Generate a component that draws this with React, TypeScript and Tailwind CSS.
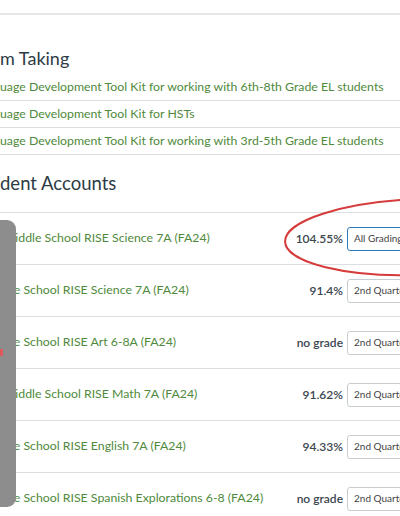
import React from 'react';

const links = [
  'uage Development Tool Kit for working with 6th-8th Grade EL students',
  'uage Development Tool Kit for HSTs',
  'uage Development Tool Kit for working with 3rd-5th Grade EL students',
];

const courses = [
  { name: 'Middle School RISE Science 7A (FA24)', grade: '104.55%', period: 'All Grading Periods', active: true },
  { name: 'dle School RISE Science 7A (FA24)', grade: '91.4%', period: '2nd Quarter' },
  { name: 'dle School RISE Art 6-8A (FA24)', grade: 'no grade', period: '2nd Quarter' },
  { name: 'Middle School RISE Math 7A (FA24)', grade: '91.62%', period: '2nd Quarter' },
  { name: 'dle School RISE English 7A (FA24)', grade: '94.33%', period: '2nd Quarter' },
  { name: 'dle School RISE Spanish Explorations 6-8 (FA24)', grade: 'no grade', period: '2nd Quarter' },
];

export default function App() {
  return (
    <div className="relative w-[400px] h-[516px] overflow-hidden bg-white font-['Lato','Noto_Sans',sans-serif] text-[#2d3b45]">
      <div className="h-[15px] border-b-2 border-[#e4e6e8]" />

      <h2 className="mt-[29px] mb-[2px] text-[18px] leading-[28px] font-normal">m Taking</h2>
      <ul>
        {links.map((l, i) => (
          <li key={i} className="h-[27px] flex items-center border-b border-[#dcdfe2] text-[12.3px] text-[#4f8a3c] whitespace-nowrap">
            {l}
          </li>
        ))}
      </ul>

      <h2 className="mt-[14px] text-[18.5px] leading-[28px] font-normal">dent Accounts</h2>
      <div className="mt-[15px] w-[460px] border-t border-[#dcdfe2]">
        {courses.map((c, i) => (
          <div key={i} className="h-[52px] flex items-center pl-[4px] border-b border-[#dcdfe2]">
            <span className="flex-1 text-[12.3px] text-[#4f8a3c] whitespace-nowrap">{c.name}</span>
            <span className="text-[12px] font-semibold text-[#3b4650] whitespace-nowrap">{c.grade}</span>
            <div
              className={
                c.active
                  ? 'ml-[4px] w-[113px] h-[24px] shrink-0 flex items-center px-[6px] bg-white border border-[#2b7abc] rounded-[3px] text-[10px] text-[#444] whitespace-nowrap'
                  : 'ml-[4px] w-[113px] h-[24px] shrink-0 flex items-center px-[6px] bg-white border border-[#c7cdd1] rounded-[3px] text-[10px] text-[#444] whitespace-nowrap'
              }
            >
              {c.period}
            </div>
          </div>
        ))}
      </div>

      <svg className="absolute left-0 top-0 pointer-events-none" width="400" height="516">
        <ellipse cx="420" cy="237" rx="135" ry="38" fill="none" stroke="#d63a3a" strokeWidth="2" transform="rotate(-2 420 237)" />
      </svg>

      <div className="absolute left-0 top-[220px] w-[16px] h-[287px] bg-[#8d8d8d] rounded-r-[9px]">
        <div className="absolute left-0 top-[129px] w-[3px] h-[7px] bg-[#e05a5a]" />
      </div>
    </div>
  );
}
